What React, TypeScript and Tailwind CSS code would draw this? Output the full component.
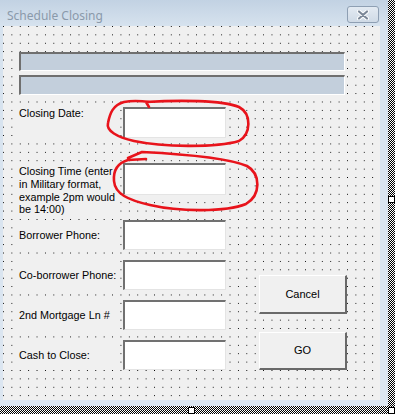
import React from "react"

const hatch =
  "bg-[repeating-conic-gradient(#000_0_25%,#fff_0_50%)] bg-[length:2px_2px]"

const dots =
  "bg-[#f0f0f0] bg-[conic-gradient(at_1.2px_1.2px,transparent_0_270deg,#000_270deg)] bg-[length:8.4px_8.4px]"

const sunken =
  "border-t-2 border-l-2 border-r border-b border-t-[#717171] border-l-[#717171] border-r-[#e4e4e4] border-b-[#e4e4e4]"

const Label = ({
  children,
  className = "",
}: {
  children: React.ReactNode
  className?: string
}) => (
  <div
    className={`w-[103px] bg-[#f0f0f0] pl-[4px] text-[10.8px] text-black ${className}`}
  >
    {children}
  </div>
)

const TextBox = ({ h }: { h: string }) => (
  <div className={`w-[103px] bg-white ${sunken} ${h}`} />
)

const Bar = ({ className = "" }: { className?: string }) => (
  <div
    className={`ml-[4px] w-[326px] bg-[#c3cfdc] border-t-2 border-l-2 border-r border-b border-t-[#6f6f6f] border-l-[#6f6f6f] border-r-white border-b-white ${className}`}
  />
)

const FormButton = ({ label, h }: { label: string; h: string }) => (
  <button
    className={`flex w-[88px] items-center justify-center bg-[#f0f0f0] border-t border-l border-t-white border-l-white border-b-2 border-r-2 border-b-[#696969] border-r-[#696969] text-[11px] text-black ${h}`}
  >
    {label}
  </button>
)

const CloseButton = () => (
  <div className="flex h-[17px] w-[32px] items-center justify-center rounded-[3px] border border-[#8e9fb3] bg-[linear-gradient(#e3eaf2,#cfdae6)]">
    <svg width="14" height="10" viewBox="0 0 14 10">
      <path
        d="M3 1.5 L11 8.5 M11 1.5 L3 8.5"
        stroke="#fff"
        strokeWidth="4"
        strokeLinecap="round"
      />
      <path
        d="M3 1.5 L11 8.5 M11 1.5 L3 8.5"
        stroke="#7c8898"
        strokeWidth="2.2"
        strokeLinecap="round"
      />
    </svg>
  </div>
)

const Handle = ({ className }: { className: string }) => (
  <div
    className={`absolute h-[7px] w-[7px] border border-black bg-white ${className}`}
  />
)

const App: React.FC = () => {
  return (
    <div className="relative grid h-[414px] w-[395px] grid-cols-[388px_7px] grid-rows-[406px_8px] overflow-hidden bg-white font-['Liberation_Sans',Arial,sans-serif]">
      {/* window */}
      <div className="flex flex-col bg-[linear-gradient(#c2d2e3,#d6e2ee_26px,#dce6f1)] pl-[3px] pr-[8px] pb-[6px]">
        <div className="flex h-[26px] items-start justify-between pt-[6px]">
          <span className="mt-[2px] pl-[4px] font-['Noto_Sans','Open_Sans',sans-serif] text-[12px] leading-[16px] text-[#8a99aa]">
            Schedule Closing
          </span>
          <div className="mr-[1px]">
            <CloseButton />
          </div>
        </div>

        <div className={`flex flex-1 flex-col pl-[12px] pt-[26px] ${dots}`}>
          <Bar className="h-[19px]" />
          <Bar className="mt-[4px] h-[20px]" />

          <div className="mt-[12px] flex">
            <div className="grid grid-cols-[108px_103px]">
              <div className="h-[56px]">
                <Label className="h-[31px] leading-[13px]">Closing Date:</Label>
              </div>
              <div className="h-[56px]">
                <TextBox h="h-[31px]" />
              </div>

              <div className="h-[57px]">
                <Label className="h-[55px] pt-[2px] leading-[12.8px]">
                  Closing Time (enter in Military format, example 2pm would be
                  14:00)
                </Label>
              </div>
              <div className="h-[57px]">
                <TextBox h="h-[32px]" />
              </div>

              {[
                "Borrower Phone:",
                "Co-borrower Phone:",
                "2nd Mortgage Ln #",
                "Cash to Close:",
              ].map((text) => (
                <React.Fragment key={text}>
                  <div className="h-[40px]">
                    <Label className="flex h-[30px] items-center whitespace-nowrap">
                      {text}
                    </Label>
                  </div>
                  <div className="h-[40px]">
                    <TextBox h="h-[30px]" />
                  </div>
                </React.Fragment>
              ))}
            </div>

            <div className="ml-[33px] mt-[168px] flex flex-col gap-[18px]">
              <FormButton label="Cancel" h="h-[39px]" />
              <FormButton label="GO" h="h-[38px]" />
            </div>
          </div>
        </div>
      </div>

      {/* selection hatch */}
      <div className={hatch} />
      <div className={hatch} />
      <div className={hatch} />

      <Handle className="left-[188px] top-[407px]" />
      <Handle className="left-[388px] top-[407px]" />
      <Handle className="left-[388px] top-[196px]" />

      {/* red pen marks */}
      <svg
        className="pointer-events-none absolute left-0 top-0"
        width="395"
        height="414"
        viewBox="0 0 395 414"
        fill="none"
      >
        <path
          d="M149 107 L146 102 C178 100 222 100 239 107 C252 114 251 134 239 141 C215 148 162 147 134 141 C117 137 106 131 108 123 C110 113 113 105 124 102 C134 100 142 101 150 102"
          stroke="#e8131b"
          strokeWidth="2.6"
          strokeLinecap="round"
          strokeLinejoin="round"
        />
        <path
          d="M128 158 L142 152 C182 154 228 158 247 166 C261 174 261 195 246 204 C226 212 180 212 150 205 C128 200 115 194 114 181 C113 169 118 163 128 160 L146 159"
          stroke="#e8131b"
          strokeWidth="2.6"
          strokeLinecap="round"
          strokeLinejoin="round"
        />
      </svg>
    </div>
  )
}

export default App
